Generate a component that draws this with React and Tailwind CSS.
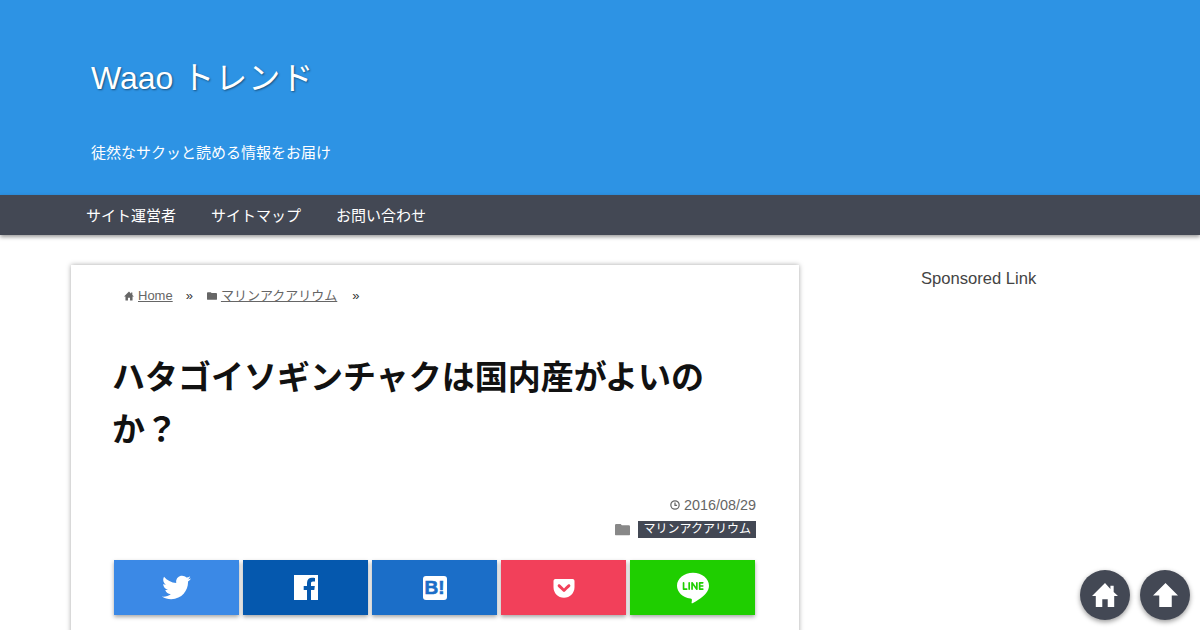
import { FaTwitter, FaGetPocket } from 'react-icons/fa';
import { SiLine } from 'react-icons/si';

const navItems = ['サイト運営者', 'サイトマップ', 'お問い合わせ'];

const FacebookIcon = () => (
  <svg viewBox="0 0 24 25" fill="currentColor" className="h-[25px] w-[24px]">
    <path d="M0 0h24v25h-7V15h3.300l.5-4H17V8.500c0-1.200.4-2 2-2h2V3c-.4 0-1.600-.2-3-.2-3 0-5 1.800-5 5.200V11H9.700v4H13v10H0z" />
  </svg>
);

const HatenaIcon = () => (
  <div className="flex size-[24px] items-center justify-center rounded-[3px] bg-white text-[19px] font-bold leading-none text-[#1b6ec8] [-webkit-text-stroke:0.6px_#1b6ec8]">
    B!
  </div>
);

const shareButtons = [
  { name: 'twitter', color: 'bg-[#3b89e6]', icon: <FaTwitter size={29} /> },
  { name: 'facebook', color: 'bg-[#0558ae]', icon: <FacebookIcon /> },
  { name: 'hatena', color: 'bg-[#1b6ec8]', icon: <HatenaIcon /> },
  { name: 'pocket', color: 'bg-[#f2405a]', icon: <FaGetPocket size={24} /> },
  { name: 'line', color: 'bg-[#1fce00]', icon: <SiLine size={32} /> },
];

const HomeIcon = ({ className }) => (
  <svg viewBox="0 0 24 24" fill="currentColor" className={className}>
    <path d="M12 1 0 13h3.500v10h6v-7h5v7h6V13H24l-4-3.700V3.500h-3v3z" />
  </svg>
);

const FolderIcon = ({ className }) => (
  <svg viewBox="0 0 24 20" fill="currentColor" className={className}>
    <path d="M0 3a2 2 0 0 1 2-2h7l2 2h11a2 2 0 0 1 2 2v13a1 1 0 0 1-1 1H1a1 1 0 0 1-1-1z" />
  </svg>
);

const ClockIcon = ({ className }) => (
  <svg viewBox="0 0 24 24" fill="none" stroke="currentColor" strokeWidth="3" className={className}>
    <circle cx="12" cy="12" r="10" />
    <path d="M12 6v7h5" />
  </svg>
);

const App = () => {
  return (
    <div className="relative h-[630px] overflow-hidden bg-white font-['Liberation_Sans','Noto_Sans_CJK_JP',sans-serif] text-[#333]">
      <header className="h-[195px] bg-[#2d93e4] pl-[91px] pt-[56px] text-white">
        <div className="text-[32px] leading-[44px] [text-shadow:1px_1px_2px_rgba(0,0,0,0.45)]">
          Waao <span className="tracking-[1px]">トレンド</span>
        </div>
        <p className="mt-[41px] text-[15px] leading-[24px]">徒然なサクッと読める情報をお届け</p>
      </header>

      <nav className="relative z-10 flex h-10 bg-[#434854] pl-[71px] text-white shadow-[0_2px_4px_rgba(0,0,0,0.4)]">
        {navItems.map((item) => (
          <span key={item} className="mr-[5px] px-[15px] text-[15px] leading-[42px]">{item}</span>
        ))}
      </nav>

      <div className="flex items-start pl-[71px] pt-[30px]">
        <main className="h-[400px] w-[728px] bg-white px-[43px] shadow-[0_0_5px_rgba(0,0,0,0.35)]">
          <div className="ml-[10px] mt-[20px] flex h-[20px] items-center pt-[1px] text-[13px] leading-[20px] text-[#666]">
            <span className="flex items-center underline">
              <HomeIcon className="mr-[4px] size-[10px]" />Home
            </span>
            <span className="ml-[13px] mr-[14px] text-[#333]">»</span>
            <span className="flex items-center underline">
              <FolderIcon className="mr-[4px] size-[10px]" />マリンアクアリウム
            </span>
            <span className="ml-[15px] text-[#333]">»</span>
          </div>

          <h1 className="-ml-[2px] mt-[47px] text-[33px] font-bold leading-[52px] text-[#111]">
            ハタゴイソギンチャクは国内産がよいのか？
          </h1>

          <div className="mt-[39px] flex items-center justify-end text-[14.4px] leading-[20px] text-[#666]">
            <ClockIcon className="mr-[4px] size-[10px]" />2016/08/29
          </div>
          <div className="mt-[6px] flex items-center justify-end">
            <FolderIcon className="mr-[8px] size-[15px] text-[#888]" />
            <span className="bg-[#434854] pl-[5.5px] pr-[5px] text-[12px] leading-[17px] text-white">マリンアクアリウム</span>
          </div>

          <div className="mt-[22px] flex w-[642px] gap-[4px]">
            {shareButtons.map((btn) => (
              <div
                key={btn.name}
                className={`${btn.color} flex h-[55px] w-[125px] items-center justify-center text-white shadow-[0_2px_4px_rgba(0,0,0,0.35)]`}
              >
                {btn.icon}
              </div>
            ))}
          </div>
        </main>

        <aside className="ml-[122px] pt-[1px] text-[16.6px] leading-[26px] text-[#444]">Sponsored Link</aside>
      </div>

      <div className="absolute bottom-[10px] right-[10px] flex gap-[10px]">
        <div className="flex size-[50px] items-center justify-center rounded-full bg-[#434854] text-white shadow-[0_2px_5px_rgba(0,0,0,0.4)]">
          <HomeIcon className="size-[26px]" />
        </div>
        <div className="flex size-[50px] items-center justify-center rounded-full bg-[#434854] text-white shadow-[0_2px_5px_rgba(0,0,0,0.4)]">
          <svg viewBox="0 0 24 24" fill="currentColor" className="size-[25px]">
            <path d="M12 0 24 12h-6v11H6V12H0z" />
          </svg>
        </div>
      </div>
    </div>
  );
};

export default App;
